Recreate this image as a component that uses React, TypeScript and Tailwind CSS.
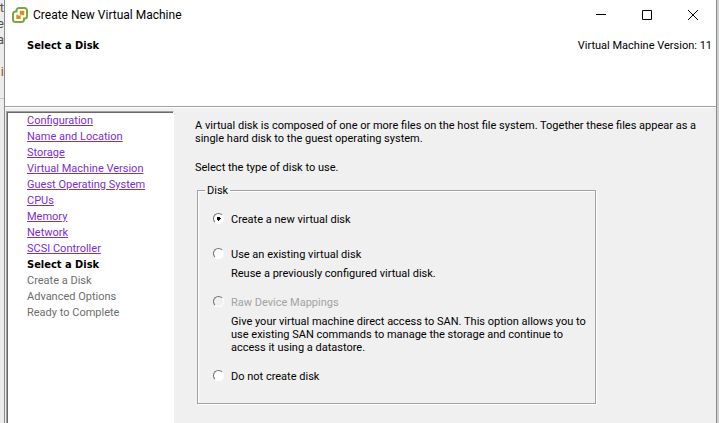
import React from "react";

const doneSteps = [
  "Configuration",
  "Name and Location",
  "Storage",
  "Virtual Machine Version",
  "Guest Operating System",
  "CPUs",
  "Memory",
  "Network",
  "SCSI Controller",
];
const pendingSteps = ["Create a Disk", "Advanced Options", "Ready to Complete"];

type Option = {
  id: string;
  label: string;
  description?: string;
  disabled?: boolean;
};

const options: Option[] = [
  { id: "new", label: "Create a new virtual disk" },
  {
    id: "existing",
    label: "Use an existing virtual disk",
    description: "Reuse a previously configured virtual disk.",
  },
  {
    id: "raw",
    label: "Raw Device Mappings",
    description:
      "Give your virtual machine direct access to SAN. This option allows you to use existing SAN commands to manage the storage and continue to access it using a datastore.",
    disabled: true,
  },
  { id: "none", label: "Do not create disk" },
];

function Logo() {
  return (
    <svg viewBox="0 0 16 16" className="size-4" aria-hidden="true">
      <path
        d="M7 1h5.500A2.500 2.500 0 0 1 15 3.500V9a2.500 2.500 0 0 1-2.500 2.500H12v1A2.500 2.500 0 0 1 9.500 15h-6A2.500 2.500 0 0 1 1 12.500V7a2.500 2.500 0 0 1 2.500-2.500h1v-1A2.500 2.500 0 0 1 7 1z"
        fill="#fff"
        stroke="#76a843"
        strokeWidth="2"
      />
      <path d="M7.500 3.500H12.500V8.500H9V12H4V7.500H7.500z" fill="#f3cf85" />
      <path d="M8 4h4v4H8zM4.500 8h4v4h-4z" fill="#d98f1c" />
      <path d="M6 7.500h2v1H6zM8.500 7.500h1v1h-1z" fill="#fff" />
    </svg>
  );
}

function WizardOption({ option }: { option: Option }) {
  return (
    <div>
      <label
        className={
          "flex items-start gap-[7px] pb-1.5 " +
          (option.disabled ? "text-[#a3a3a3]" : "")
        }
      >
        <input
          type="radio"
          name="disk"
          value={option.id}
          defaultChecked={option.id === "new"}
          disabled={option.disabled}
          className="size-[11px] shrink-0 appearance-none rounded-full border border-t-[#707070] border-r-white border-b-white border-l-[#707070] bg-white bg-center bg-no-repeat checked:bg-[radial-gradient(circle,#000_2px,transparent_2px)] disabled:bg-[#f0f0f0]"
        />
        {option.label}
      </label>
      {option.description && <p className="pl-[18px]">{option.description}</p>}
    </div>
  );
}

export default function App() {
  return (
    <div className="flex h-screen overflow-hidden bg-[#d6d6d6] font-['Roboto',sans-serif] text-[11px] leading-[13px] text-black">
      <div
        aria-hidden="true"
        className="flex w-1 shrink-0 flex-col items-end overflow-hidden bg-[#ececec] text-[13px] leading-4 text-[#555]"
      >
        <span>t</span>
        <span>e</span>
        <span>a</span>
        <span className="pt-4 text-[#8a5a3a]">i</span>
        <span className="mt-[18px] w-full border-t border-[#c8c8c8]" />
      </div>
      <main className="flex min-w-0 flex-1 flex-col border-x border-[#8a8a8a] bg-[#f0f0f0]">
        <header className="bg-white pb-[54px]">
          <div className="flex h-[29px] items-center justify-between pr-[17px] pl-[7px]">
            <div className="flex items-center gap-[5px]">
              <Logo />
              <h1 className="text-[12px] leading-4">Create New Virtual Machine</h1>
            </div>
            <div className="flex gap-[34px]">
              <button type="button" aria-label="Minimize">
                <svg viewBox="0 0 12 12" className="size-3" fill="none" stroke="#000">
                  <path d="M1 5.500h10" />
                </svg>
              </button>
              <button type="button" aria-label="Maximize">
                <svg viewBox="0 0 12 12" className="size-3" fill="none" stroke="#000">
                  <path d="M1.500 1.500h9v9h-9z" />
                </svg>
              </button>
              <button type="button" aria-label="Close">
                <svg viewBox="0 0 12 12" className="size-3" fill="none" stroke="#000">
                  <path d="M1 1l10 10M11 1L1 11" />
                </svg>
              </button>
            </div>
          </div>
          <div className="flex justify-between pt-[10px] pr-1 pl-[22px]">
            <h2 className="font-['DejaVu_Sans_Condensed',sans-serif] font-bold">
              Select a Disk
            </h2>
            <p>Virtual Machine Version: 11</p>
          </div>
        </header>
        <div className="mb-[3px] border-t border-b border-t-[#a0a0a0] border-b-white" />
        <div className="flex min-h-0 flex-1">
          <nav className="ml-px w-[168px] shrink-0 border-t border-r border-l border-t-[#a0a0a0] border-r-white border-l-[#a0a0a0] bg-white pt-px pl-5 leading-4 shadow-[inset_1px_1px_0_#696969]">
            <ol>
              {doneSteps.map((step) => (
                <li key={step}>
                  <a href="#" className="text-[#7b2fd0] underline">
                    {step}
                  </a>
                </li>
              ))}
              <li className="font-['DejaVu_Sans_Condensed',sans-serif] font-bold">
                Select a Disk
              </li>
              {pendingSteps.map((step) => (
                <li key={step} className="text-[#6d6d6d]">
                  {step}
                </li>
              ))}
            </ol>
          </nav>
          <section className="min-w-0 flex-1 pt-2 pr-2.5 pl-[21px]">
            <p>
              A virtual disk is composed of one or more files on the host file system.
              Together these files appear as a single hard disk to the guest operating
              system.
            </p>
            <p className="pt-4">Select the type of disk to use.</p>
            <fieldset className="mt-[10px] ml-0.5 flex max-w-[399px] flex-col gap-4 border border-[#a0a0a0] pt-4 pr-2 pb-[14px] pl-[15px] shadow-[1px_1px_0_#fff,inset_1px_1px_0_#fff]">
              <legend className="-ml-2 px-0.5">Disk</legend>
              {options.map((option) => (
                <WizardOption key={option.id} option={option} />
              ))}
            </fieldset>
          </section>
        </div>
      </main>
      <div className="w-0.5 shrink-0 bg-[#d0d0d0]" />
    </div>
  );
}
